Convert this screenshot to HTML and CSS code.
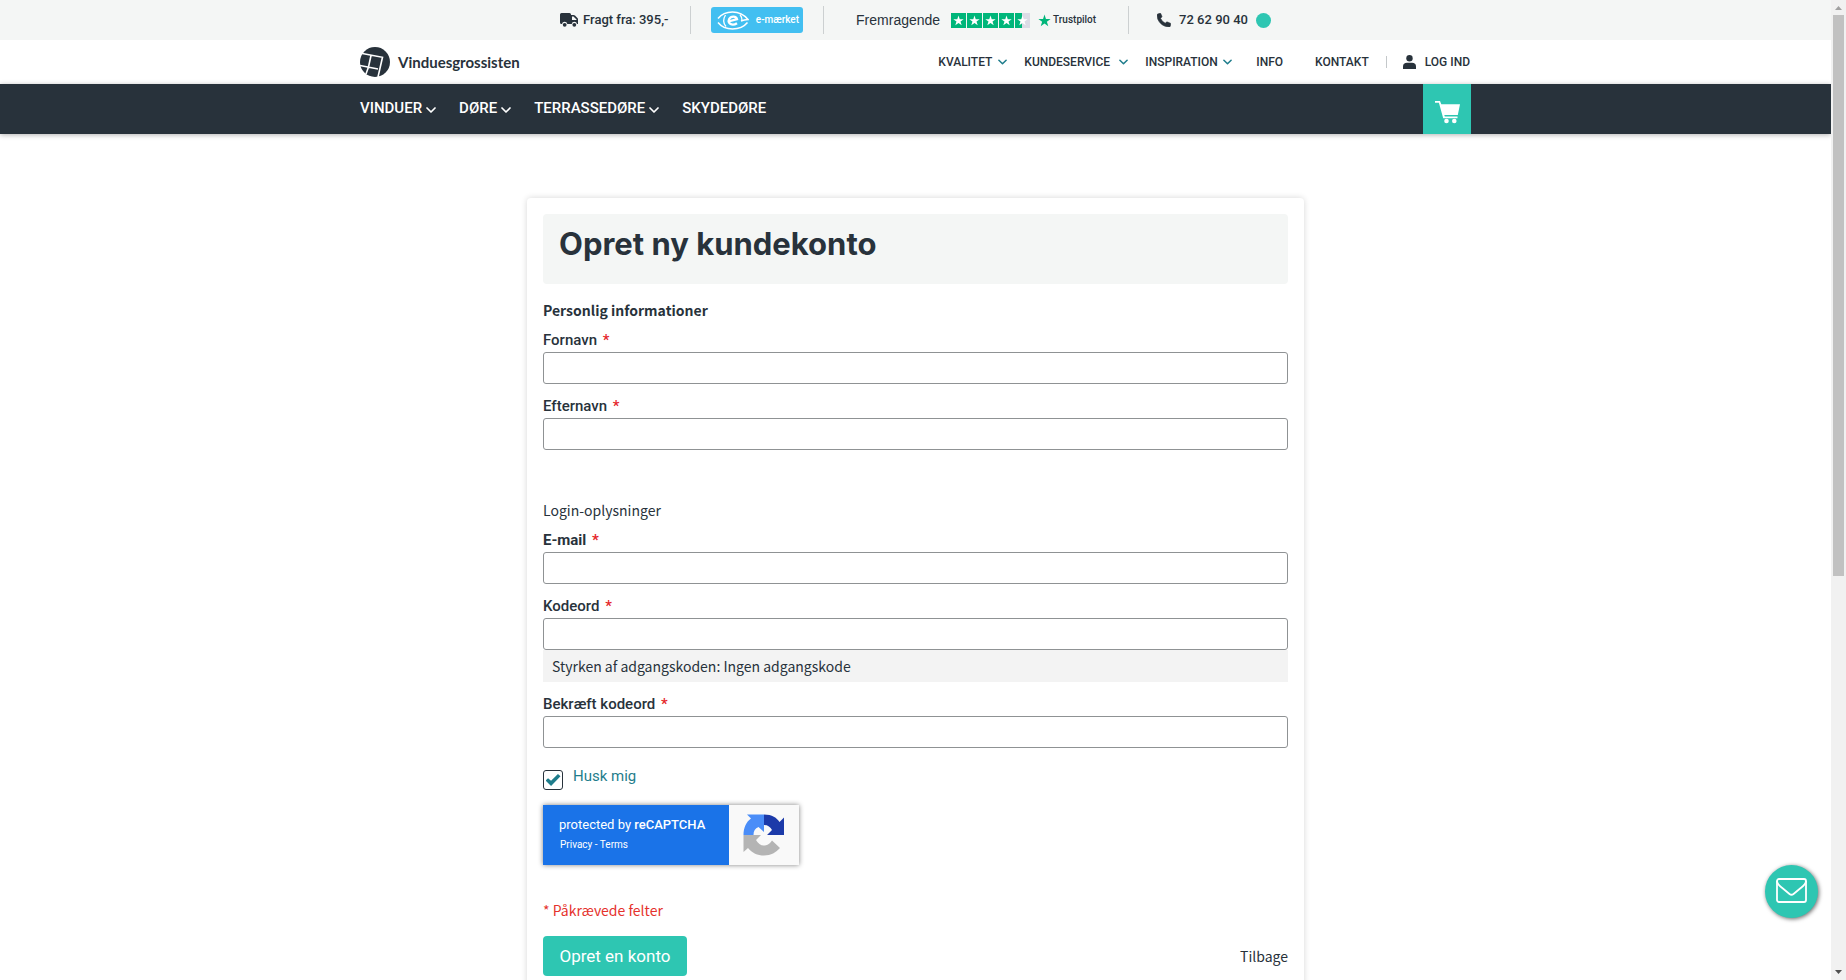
FILE: index.html
```html
<!DOCTYPE html>
<html lang="da">
<head>
<meta charset="utf-8">
<title>Opret ny kundekonto</title>
<link rel="stylesheet" href="styles.css">
</head>
<body>
<svg class="defs" width="0" height="0" aria-hidden="true">
  <symbol id="chevron" viewBox="0 0 10 6"><path d="M1 1l4 4 4-4" fill="none" stroke="currentColor" stroke-width="1.7" stroke-linecap="round" stroke-linejoin="round"/></symbol>
  <symbol id="star" viewBox="0 0 24 24"><path d="M12 1l2.7 8.1h8.6l-6.9 5.1 2.6 8.2-7-5-7 5 2.6-8.2L.7 9.100h8.600z" fill="currentColor"/></symbol>
</svg>
<div class="page">
  <header class="header">
    <div class="usp">
      <div class="usp-item shipping">
        <svg width="18" height="14" viewBox="0 0 18 14"><path d="M1.500 0h8A1.500 1.500 0 0 1 11 1.500V2h2.500a2 2 0 0 1 1.500.6L17.400 5a2 2 0 0 1 .6 1.500V11h-1a2.700 2.700 0 0 0-5.300 0H7.300A2.700 2.700 0 0 0 2 11h-.5A1.500 1.500 0 0 1 0 9.500v-8A1.500 1.500 0 0 1 1.500 0zM12 3.500V7h4.500v-.5l-3-3z" fill="#28323b" fill-rule="evenodd"/><circle cx="4.700" cy="11.800" r="1.900" fill="#28323b"/><circle cx="14.300" cy="11.800" r="1.900" fill="#28323b"/></svg>
        <span>Fragt fra: 395,-</span>
      </div>
      <div class="usp-item">
        <a class="emark" href="#">
          <svg width="32" height="19" viewBox="0 0 32 19"><path d="M1 7.500C5 2.500 10 1 15.500 1S26.500 3 31 8.500c-3 .3-5 .8-7 1.500M1 11.500C5 16.500 10 18 15.500 18c6 0 11-1.700 15-6.500" fill="none" stroke="#fff" stroke-width="1.500"/><path d="M8.500 4C6 8 6 12 9 15.500M23 3.500c1.500 2 2 4 2 6" fill="none" stroke="#fff" stroke-width="1.300"/><path d="M11.500 10.500l8.500-2.300C19.300 5 14 4.600 12.200 8 10.300 12.500 15 15.600 20 12.200" fill="none" stroke="#fff" stroke-width="2.300"/></svg>
          <span>e-mærket</span>
        </a>
      </div>
      <a class="usp-item trust" href="#">
        <span class="trust-word">Fremragende</span>
        <span class="stars">
          <span class="star"><svg><use href="#star"/></svg></span>
          <span class="star"><svg><use href="#star"/></svg></span>
          <span class="star"><svg><use href="#star"/></svg></span>
          <span class="star"><svg><use href="#star"/></svg></span>
          <span class="star half"><svg><use href="#star"/></svg></span>
        </span>
        <span class="trust-brand"><svg width="13" height="13"><use href="#star"/></svg><span>Trustpilot</span></span>
      </a>
      <div class="usp-item phone">
        <svg width="14" height="14" viewBox="0 0 14 14"><path d="M.4 1.300L2.700.2c.4-.2.8 0 1 .4l1.200 2.600c.1.400 0 .7-.2 1L3.500 5.300a9 9 0 0 0 4.700 4.900l1.300-1.100c.3-.2.700-.3 1-.1l2.800 1.200c.4.200.6.500.5.900l-.6 2.200c-.1.400-.4.700-.8.700C5.600 14 0 8.400 0 2c0-.3.100-.6.400-.7z" fill="#28323b" stroke="#28323b" stroke-width=".6"/></svg>
        <span class="phone-number">72 62 90 40</span>
        <span class="dot"></span>
      </div>
    </div>
    <div class="container top">
      <a class="logo" href="#">
        <svg width="30" height="30" viewBox="0 0 30 30"><circle cx="15" cy="15" r="15" fill="#28323b"/><path d="M1 6.300l21.500 4L18 30M11 8.500L8.500 20 6 27M0 18.500l18 3.500" fill="none" stroke="#fff" stroke-width="1.600"/></svg>
        <span>Vinduesgrossisten</span>
      </a>
      <nav class="links">
        <a class="kvalitet" href="#">KVALITET<svg><use href="#chevron"/></svg></a>
        <a class="kundeservice" href="#">KUNDESERVICE<svg><use href="#chevron"/></svg></a>
        <a class="inspiration" href="#">INSPIRATION<svg><use href="#chevron"/></svg></a>
        <a class="info" href="#">INFO</a>
        <a href="#">KONTAKT</a>
        <a class="login" href="#"><svg class="user" viewBox="0 0 13 14"><circle cx="6.500" cy="3.200" r="3.200" fill="currentColor"/><path d="M0 14v-2.500C0 9 1.500 7.800 4 7.800h5c2.500 0 4 1.200 4 3.700V14z" fill="currentColor"/></svg>LOG IND</a>
      </nav>
    </div>
    <div class="bar">
      <div class="container bar-inner">
        <nav class="menu">
          <a href="#">VINDUER<svg><use href="#chevron"/></svg></a>
          <a href="#">DØRE<svg><use href="#chevron"/></svg></a>
          <a href="#">TERRASSEDØRE<svg><use href="#chevron"/></svg></a>
          <a href="#">SKYDEDØRE</a>
        </nav>
        <a class="cart" href="#" aria-label="Kurv">
          <svg width="25" height="23" viewBox="0 0 25 23"><path d="M0 0h5l1.300 3.200H25L22.800 14H9.300l.5 1.500h12.700v1.700H8.200L3.900 1.700H0z" fill="#fff"/><circle cx="11.500" cy="20" r="2.300" fill="#fff"/><circle cx="19.300" cy="20" r="2.300" fill="#fff"/></svg>
        </a>
      </div>
    </div>
  </header>

  <main class="card">
    <h1>Opret ny kundekonto</h1>
    <form>
      <section class="group">
        <h2 class="legend strong">Personlig informationer</h2>
        <div class="field"><label for="first">Fornavn <i>*</i></label><input id="first" type="text"></div>
        <div class="field"><label for="last">Efternavn <i>*</i></label><input id="last" type="text"></div>
      </section>
      <section class="group login-group">
        <h2 class="legend">Login-oplysninger</h2>
        <div class="field"><label class="dark" for="email">E-mail <i>*</i></label><input id="email" type="email"></div>
        <div class="field"><label for="pass">Kodeord <i>*</i></label><input id="pass" type="password"><div class="meter">Styrken af adgangskoden: Ingen adgangskode</div></div>
        <div class="field"><label for="confirm">Bekræft kodeord <i>*</i></label><input id="confirm" type="password"></div>
      </section>
      <div class="remember">
        <input id="remember" type="checkbox" checked>
        <label for="remember">Husk mig</label>
      </div>
      <div class="captcha">
        <div class="captcha-text">
          <div>protected by <b>reCAPTCHA</b></div>
          <div class="captcha-links"><a href="#">Privacy</a> - <a href="#">Terms</a></div>
        </div>
        <div class="captcha-logo">
          <svg width="42" height="42" viewBox="0 0 42 42"><path d="M21 .5C29 .5 34 4 36.500 8L41 3.500V21H24l5-5c-1.500-3-4-5-8-5z" fill="#1c3aa9"/><path d="M21 .5H4l4 4C3 8 .5 14 .5 21H10.500c0-4 1.500-6.500 5-8l5.500 5z" fill="#4a8df8"/><path d="M.5 21v17l4.500-4c4 5 9.500 7.500 16 7.500 7 0 12-3 16-7.500l-8-7.500c-2.500 4-5.500 5-8 5-3.500 0-6-2-8-5.500l5-5z" fill="#b4b4b4"/></svg>
        </div>
      </div>
      <p class="required">* Påkrævede felter</p>
      <div class="actions">
        <button type="submit">Opret en konto</button>
        <a href="#">Tilbage</a>
      </div>
    </form>
  </main>
</div>
<div class="scrollbar" aria-hidden="true">
  <svg width="7" height="4" viewBox="0 0 7 4"><path d="M0 4l3.500-4L7 4z" fill="#a0a0a0"/></svg>
  <div class="track"><div class="thumb"></div></div>
  <svg width="7" height="4" viewBox="0 0 7 4"><path d="M0 0l3.500 4L7 0z" fill="#505050"/></svg>
</div>
<button class="chat" type="button" aria-label="Skriv til os">
  <svg width="31" height="25" viewBox="0 0 31 25" fill="none" stroke="#fff" stroke-width="1.800"><rect x="1" y="1" width="29" height="23" rx="2"/><path d="M1 3c0 3 2 4.500 5 6.800L13.500 16q2 1.600 4 0L25 9.800C28 7.500 30 6 30 3"/></svg>
</button>
</body>
</html>
```

FILE: styles.css
```css
* { box-sizing: border-box; }
body {
  margin: 0;
  height: 100vh;
  display: flex;
  overflow: hidden;
  background: #fff;
  color: #28323b;
  font-family: "Noto Sans CJK SC", "Noto Sans", sans-serif;
  font-size: 14px;
  line-height: 20px;
}
a { color: inherit; text-decoration: none; }
.defs { position: absolute; }
.page { flex: 1; min-width: 0; overflow: hidden; }
.container { width: 100%; max-width: 1111px; margin: 0 auto; }
.header { font-family: Roboto, sans-serif; font-weight: 500; }

.usp { height: 40px; background: #f4f6f5; display: flex; justify-content: center; align-items: center; font-size: 13px; }
.usp-item { display: flex; align-items: center; height: 28px; padding: 0 20px; }
.usp-item + .usp-item { border-left: 1px solid #ccd0d1; }
.shipping { gap: 5px; }
.shipping span { min-width: 87px; }
.emark { display: flex; align-items: center; justify-content: space-between; width: 92px; height: 26px; padding: 0 4px 0 6px; border-radius: 3px; background: #42bff1; color: #fff; font-size: 10px; }
.trust { padding: 0 32px; gap: 8px; }
.trust-word { min-width: 87px; font: 14px/20px "Liberation Sans", sans-serif; }
.stars { display: flex; gap: 1px; }
.star { display: flex; align-items: center; justify-content: center; width: 15px; height: 15px; background: #00b67a; color: #fff; }
.star svg { width: 11px; height: 11px; }
.half { background: linear-gradient(90deg, #00b67a 50%, #dcdce6 50%); }
.trust-brand { display: flex; align-items: center; gap: 2px; min-width: 58px; font: 500 10px/14px Roboto, sans-serif; }
.trust-brand svg { color: #00b67a; }
.phone { padding-left: 28px; }
.phone-number { min-width: 68px; margin: 0 8px; }
.dot { width: 15px; height: 15px; border-radius: 50%; background: #2ec6b2; }

.top { height: 44px; display: flex; align-items: center; justify-content: space-between; }
.logo { display: flex; align-items: center; gap: 8px; font: 700 15px/20px Lato, sans-serif; }
.links { display: flex; align-items: center; font-size: 12px; }
.links a { display: flex; align-items: center; justify-content: space-between; gap: 4px; margin-right: 17px; }
.links svg { width: 9px; height: 6px; color: #1f7d8c; }
.links .kvalitet { min-width: 69px; }
.links .kundeservice { min-width: 104px; }
.links .inspiration { min-width: 87px; }
.links .info { margin: 0 32px 0 7px; }
.links .login { margin-right: 1px; padding-left: 16px; gap: 9px; line-height: 12px; border-left: 1px solid #c4c8ca; }
.links .user { width: 13px; height: 14px; margin: -1px 0; color: #28323b; }

.bar { height: 50px; background: #28323b; box-shadow: 0 1px 5px rgba(0, 0, 0, .3); color: #fff; }
.bar-inner { display: flex; justify-content: space-between; height: 100%; }
.menu { display: flex; align-items: center; gap: 23px; padding-bottom: 2px; font-size: 15px; }
.menu a { display: flex; align-items: center; gap: 4px; }
.menu svg { width: 10px; height: 6px; margin-top: 3px; }
.cart { width: 48px; display: flex; align-items: center; justify-content: center; padding-top: 6px; background: #2ec6b2; }

.card { width: calc(100% - 32px); max-width: 777px; margin: 64px auto 0; padding: 16px; border-radius: 4px; box-shadow: 0 0 6px rgba(0, 0, 0, .16); }
h1 { margin: 0; height: 70px; padding: 12px 16px; border-radius: 4px; background: #f4f6f5; font: 700 31px/36px Inter, sans-serif; }
.group { padding-top: 16px; }
.login-group { padding-top: 38px; }
.legend { margin: 0 0 10px; font-size: 14px; line-height: 20px; font-weight: 400; }
.strong { font-weight: 700; }
.field { margin-bottom: 12px; }
.field label { display: block; margin-bottom: 2px; font: 500 15px/20px Roboto, sans-serif; }
.field .dark { font-weight: 700; }
.field i { margin-left: 2px; font-style: normal; color: #e5262a; }
.field input { display: block; width: 100%; height: 32px; padding: 0 9px; border: 1px solid #8f9294; border-radius: 3px; background: #fff; font: inherit; }
.meter { height: 32px; padding: 0 9px; background: #f3f3f3; line-height: 32px; }

.remember { display: flex; gap: 10px; padding-top: 6px; color: #1f7d8c; font: 15px/20px Roboto, sans-serif; }
.remember input { appearance: none; width: 20px; height: 20px; margin: 4px 0 0; border: 1px solid #28323b; border-radius: 3px; display: grid; place-items: center; }
.remember input:checked::before { content: ""; width: 15px; height: 12px; background: #1f7d8c; clip-path: polygon(0 54%, 17% 36%, 37% 56%, 83% 0, 100% 18%, 37% 100%); }

.captcha { display: flex; width: 256px; height: 60px; margin-top: 15px; box-shadow: 0 0 5px #808080; background: #f9f9f9; }
.captcha-text { width: 186px; padding: 10px 16px; background: #1a73e8; color: #fff; font: 13px/20px Roboto, sans-serif; }
.captcha b { font-weight: 500; }
.captcha-links { padding-left: 1px; font-size: 10px; }
.captcha-logo { flex: 1; display: grid; place-items: center; }
.required { margin: 35px 0 16px; color: #e5322d; }
.actions { display: flex; align-items: center; justify-content: space-between; padding-bottom: 24px; }
.actions button { width: 144px; height: 40px; padding: 0; border: 0; border-radius: 4px; background: #2ec6b2; color: #fff; font: 17px/20px Roboto, sans-serif; }

.scrollbar { width: 15px; padding: 6px 2px; display: flex; flex-direction: column; align-items: center; gap: 5px; background: #f1f1f1; }
.scrollbar svg { flex: none; }
.track { flex: 1; width: 11px; }
.thumb { height: 59%; background: #c1c1c1; }
.chat { position: fixed; right: 28px; bottom: 62px; width: 53px; height: 53px; display: grid; place-items: center; padding: 0 0 3px; border: 0; border-radius: 50%; background: #2ec6b2; box-shadow: 1px 1px 4px rgba(0, 0, 0, .6); }
```
